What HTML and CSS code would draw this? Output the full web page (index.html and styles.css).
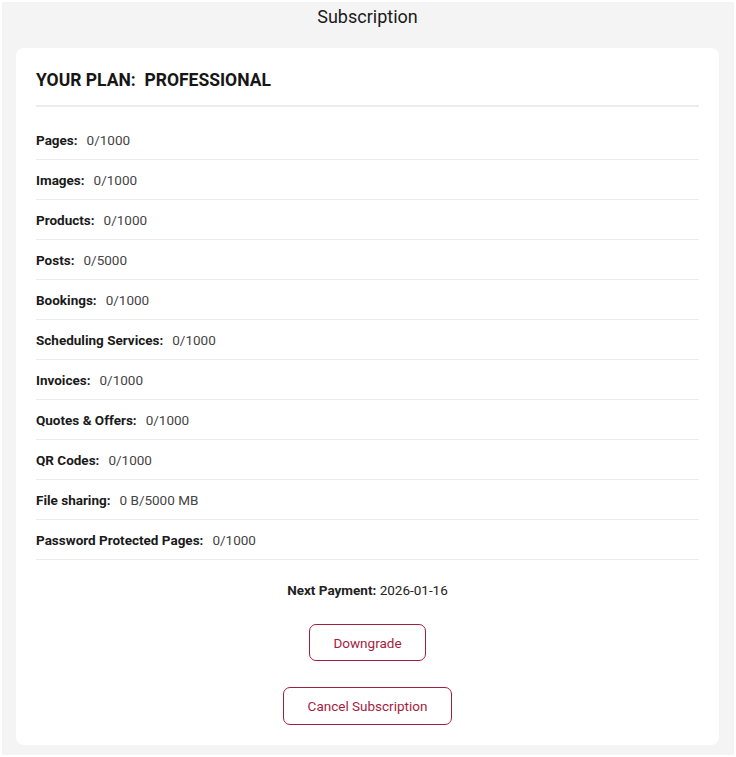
FILE: index.html
```html
<!DOCTYPE html>
<html>
<head>
<meta charset="utf-8">
<link rel="stylesheet" href="styles.css">
</head>
<body>
<div class="frame">
  <h1 class="title">Subscription</h1>
  <div class="card">
    <div class="plan">YOUR PLAN:&nbsp; PROFESSIONAL</div>
    <ul class="limits">
      <li><b>Pages:</b> 0/1000</li>
      <li><b>Images:</b> 0/1000</li>
      <li><b>Products:</b> 0/1000</li>
      <li><b>Posts:</b> 0/5000</li>
      <li><b>Bookings:</b> 0/1000</li>
      <li><b>Scheduling Services:</b> 0/1000</li>
      <li><b>Invoices:</b> 0/1000</li>
      <li><b>Quotes &amp; Offers:</b> 0/1000</li>
      <li><b>QR Codes:</b> 0/1000</li>
      <li><b>File sharing:</b> 0 B/5000 MB</li>
      <li><b>Password Protected Pages:</b> 0/1000</li>
    </ul>
    <p class="next"><b>Next Payment:</b> 2026-01-16</p>
    <div class="actions">
      <button class="btn btn-down">Downgrade</button>
      <button class="btn btn-cancel">Cancel Subscription</button>
    </div>
  </div>
</div>
</body>
</html>
```

FILE: styles.css
```css
* { box-sizing: border-box; }
html, body { margin: 0; padding: 0; background: #ffffff; }
body {
  font-family: Roboto, "Liberation Sans", sans-serif;
  color: #1c1c1c;
  padding: 2px;
}
.frame {
  background: #f4f4f4;
  padding: 0 15px 10px 14px;
  height: 753px;
}
.title {
  margin: 0;
  height: 46px;
  padding-top: 5px;
  font-size: 18px;
  font-weight: 400;
  text-align: center;
  line-height: 20px;
  color: #1a1a1a;
}
.card {
  background: #fff;
  border-radius: 8px;
  padding: 20px;
  height: 697px;
}
.plan {
  font-size: 17.5px;
  font-weight: 700;
  line-height: 24px;
  padding-bottom: 13px;
  border-bottom: 2px solid #ececec;
  color: #161616;
}
.limits {
  list-style: none;
  margin: 13px 0 0;
  padding: 0;
}
.limits li {
  height: 40px;
  display: flex;
  align-items: center;
  font-size: 13.5px;
  color: #444;
  border-bottom: 1px solid #ececec;
}
.limits li b {
  color: #1a1a1a;
  font-weight: 700;
  margin-right: 9px;
}
.next {
  margin: 20px 0 0;
  text-align: center;
  font-size: 13.5px;
  line-height: 20px;
  color: #222;
}
.next b { font-weight: 700; }
.actions {
  display: flex;
  flex-direction: column;
  align-items: center;
  gap: 26px;
  margin-top: 24px;
}
.btn {
  font-family: inherit;
  font-size: 13.5px;
  color: #a31d3f;
  background: #fff;
  border: 1px solid #a31d3f;
  border-radius: 7px;
  height: 37px;
  padding: 0 23px;
}
.btn-cancel { height: 38px; padding: 0 24px; }
```
